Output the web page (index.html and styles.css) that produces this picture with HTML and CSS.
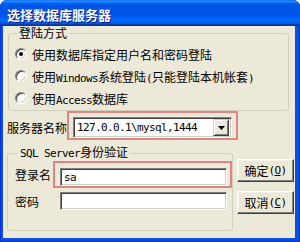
FILE: index.html
```html
<!DOCTYPE html>
<html lang="zh-CN">
<head>
<meta charset="utf-8">
<title>选择数据库服务器</title>
<link rel="stylesheet" href="styles.css">
</head>
<body>
<div class="window">
  <div class="titlebar"><span class="title">选择数据库服务器</span></div>
  <div class="client">
    <fieldset class="group g1">
      <legend>登陆方式</legend>
      <div class="radio-row"><span class="radio checked"></span><span>使用数据库指定用户名和密码登陆</span></div>
      <div class="radio-row"><span class="radio"></span><span>使用<span class="en">Windows</span>系统登陆<span class="en">(</span>只能登陆本机帐套<span class="en">)</span></span></div>
      <div class="radio-row"><span class="radio"></span><span>使用<span class="en">Access</span>数据库</span></div>
    </fieldset>
    <div class="server-row">
      <span class="server-label">服务器名称</span>
      <div class="mark mark-server">
        <div class="combo">
          <span class="combo-text en">127.0.0.1\mysql,1444</span>
          <span class="combo-btn"><svg width="7" height="4" viewBox="0 0 7 4"><path d="M0 0h7L3.5 4z" fill="#000"/></svg></span>
        </div>
      </div>
    </div>
    <div class="bottom">
      <fieldset class="group g2">
        <legend><span class="en">SQL Server</span>身份验证</legend>
        <div class="field-row">
          <span class="field-label">登录名</span>
          <div class="mark mark-field"><div class="input"><span class="en">sa</span></div></div>
        </div>
        <div class="field-row row-gap">
          <span class="field-label">密码</span>
          <div class="plain"><div class="input"></div></div>
        </div>
      </fieldset>
      <div class="buttons">
        <div class="btn">确定<span class="en">(<u>O</u>)</span></div>
        <div class="btn">取消<span class="en">(<u>C</u>)</span></div>
      </div>
    </div>
  </div>
</div>
</body>
</html>
```
FILE: styles.css
```css
* { box-sizing: border-box; }
html, body { margin: 0; padding: 0; background: #ffffff; }
body {
  width: 300px;
  height: 242px;
  overflow: hidden;
  font-family: "Noto Sans CJK SC", "Noto Sans", sans-serif;
  font-size: 12px;
  color: #000;
}
.en {
  font-family: "DejaVu Sans Mono", "Liberation Mono", monospace;
  font-size: 11px;
  letter-spacing: -0.62px;
}
.window {
  width: 300px;
  height: 242px;
  display: flex;
  flex-direction: column;
  background: #0B4FDE;
  box-shadow: inset 0 0 0 1px #0831D9;
  border-radius: 7px 7px 0 0;
  overflow: hidden;
}
.titlebar {
  height: 26px;
  flex: none;
  display: flex;
  align-items: center;
  padding: 3px 0 0 7px;
  background: linear-gradient(to bottom, #0058EE 0%, #3593FF 4%, #288EFF 6%, #127DFF 8%, #036FFC 10%, #0262EE 14%, #0057E5 20%, #0054E3 24%, #0055EB 56%, #005BF5 66%, #026AFE 76%, #0062EF 86%, #0052D6 92%, #0040AB 94%, #003092 100%);
}
.title {
  color: #fff;
  font-weight: bold;
  font-size: 13px;
  line-height: 16px;
  text-shadow: 1px 1px 0 #0A1883;
}
.client {
  flex: 1;
  background: #ECE9D8;
  margin: 0 5px 4px 3px;
  padding: 0 1px 0 4px;
  display: flex;
  flex-direction: column;
}
.group {
  margin: 0;
  border: 1px solid #D0D0BF;
  border-radius: 3px;
  min-width: 0;
}
.group legend {
  padding: 0 2px;
  line-height: 14px;
  font-size: 12px;
}
.g1 {
  margin: 0 5px 0 1px;
  padding: 3px 0 1px 6px;
}
.g1 legend { margin-left: 2px; }
.radio-row {
  display: flex;
  align-items: center;
  height: 22px;
  gap: 5px;
  white-space: nowrap;
}
.radio {
  width: 12px;
  height: 12px;
  flex: none;
  border-radius: 50%;
  background: #fff;
  border: 1px solid;
  border-color: #808080 #ffffff #ffffff #808080;
  box-shadow: inset 1px 1px 0 #404040, inset -1px -1px 0 #D4D0C8;
  display: flex;
  align-items: center;
  justify-content: center;
}
.radio.checked::after {
  content: "";
  width: 4px;
  height: 4px;
  border-radius: 50%;
  background: #000;
}
.server-row {
  display: flex;
  align-items: center;
}
.server-label {
  width: 60px;
  padding-top: 4px;
  white-space: nowrap;
}
.mark {
  border: 2px solid #E08484;
}
.mark-server {
  padding: 4px 4px 0 4px;
}
.combo {
  width: 159px;
  height: 21px;
  display: flex;
  align-items: center;
  background: #fff;
  border: 1px solid;
  border-color: #808080 #ffffff #ffffff #808080;
  box-shadow: inset 1px 1px 0 #404040, inset -1px -1px 0 #D4D0C8;
  padding: 2px 2px 2px 3px;
}
.combo-text { flex: 1; }
.combo-btn {
  width: 16px;
  height: 17px;
  flex: none;
  display: flex;
  align-items: center;
  justify-content: center;
  background: #ECE9D8;
  border: 1px solid;
  border-color: #D4D0C8 #404040 #404040 #D4D0C8;
  box-shadow: inset 1px 1px 0 #fff, inset -1px -1px 0 #808080;
}
.bottom {
  display: flex;
  gap: 4px;
  margin-top: 5px;
}
.g2 {
  width: 226px;
  padding: 0 0 20px 7px;
}
.g2 legend { margin-left: 3px; }
.field-row {
  display: flex;
  align-items: center;
}
.row-gap { margin-top: 4px; }
.field-label {
  width: 38px;
  white-space: nowrap;
}
.mark-field {
  padding: 5px 3px 0 5px;
}
.plain {
  padding-left: 7px;
}
.input {
  width: 167px;
  height: 18px;
  background: #fff;
  border: 1px solid;
  border-color: #808080 #ffffff #ffffff #808080;
  box-shadow: inset 1px 1px 0 #404040, inset -1px -1px 0 #D4D0C8;
  padding: 1px 3px 0 3px;
  display: flex;
  align-items: center;
}
.buttons {
  display: flex;
  flex-direction: column;
  gap: 9px;
  padding-top: 14px;
}
.btn {
  width: 57px;
  height: 23px;
  display: flex;
  align-items: center;
  justify-content: center;
  background: #ECE9D8;
  border: 1px solid;
  border-color: #ffffff #404040 #404040 #ffffff;
  box-shadow: inset -1px -1px 0 #808080, inset 1px 1px 0 #F4F2E8;
  white-space: nowrap;
}
```
